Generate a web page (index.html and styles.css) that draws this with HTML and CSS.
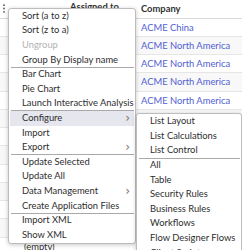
FILE: index.html
```
<!DOCTYPE html>
<html>
<head>
<meta charset="utf-8">
<link rel="stylesheet" href="styles.css">
</head>
<body>
<div class="table">
  <div class="row head">
    <div class="c0"><svg class="dots" width="4" height="9" viewBox="0 0 4 9"><circle cx="2" cy="1.2" r="0.9"/><circle cx="2" cy="4.5" r="0.9"/><circle cx="2" cy="7.8" r="0.9"/></svg></div>
    <div class="c1 hc1">Assigned to</div>
    <div class="c2">Company</div>
  </div>
  <div class="row"><div class="c0"></div><div class="c1">Beth Anglin</div><div class="c2 link">ACME China</div></div>
  <div class="row alt"><div class="c0"></div><div class="c1">Beth Anglin</div><div class="c2 link">ACME North America</div></div>
  <div class="row"><div class="c0"></div><div class="c1">David Loo</div><div class="c2 link">ACME North America</div></div>
  <div class="row alt"><div class="c0"></div><div class="c1">David Loo</div><div class="c2 link">ACME North America</div></div>
  <div class="row"><div class="c0"></div><div class="c1">Don Goodliffe</div><div class="c2 link">ACME North America</div></div>
  <div class="row alt"><div class="c0"></div><div class="c1">Fred Luddy</div><div class="c2 link">ACME North America</div></div>
  <div class="row"><div class="c0"></div><div class="c1">Fred Luddy</div><div class="c2 link">ACME North America</div></div>
  <div class="row alt"><div class="c0"></div><div class="c1">ITIL User</div><div class="c2 link">ACME North America</div></div>
  <div class="row"><div class="c0"></div><div class="c1">ITIL User</div><div class="c2 link">ACME North America</div></div>
  <div class="row alt"><div class="c0"></div><div class="c1">Luke Wilson</div><div class="c2 link">ACME North America</div></div>
  <div class="row"><div class="c0"></div><div class="c1">Luke Wilson</div><div class="c2 link">ACME North America</div></div>
  <div class="row alt"><div class="c0"></div><div class="c1">Luke Wilson</div><div class="c2 link">ACME North America</div></div>
  <div class="row"><div class="c0"></div><div class="c1">(empty)</div><div class="c2 link">ACME North America</div></div>
</div>

<div class="menu main">
  <div class="item">Sort (a to z)</div>
  <div class="item">Sort (z to a)</div>
  <div class="item disabled">Ungroup</div>
  <div class="item">Group By Display name</div>
  <div class="sep"></div>
  <div class="item">Bar Chart</div>
  <div class="item">Pie Chart</div>
  <div class="item">Launch Interactive Analysis</div>
  <div class="sep"></div>
  <div class="item active">Configure<span class="chev">&#x203A;</span></div>
  <div class="item">Import</div>
  <div class="item">Export<span class="chev">&#x203A;</span></div>
  <div class="sep"></div>
  <div class="item">Update Selected</div>
  <div class="item">Update All</div>
  <div class="item">Data Management<span class="chev">&#x203A;</span></div>
  <div class="item">Create Application Files</div>
  <div class="sep"></div>
  <div class="item">Import XML</div>
  <div class="item">Show XML</div>
</div>

<div class="menu sub">
  <div class="item">List Layout</div>
  <div class="item">List Calculations</div>
  <div class="item">List Control</div>
  <div class="sep"></div>
  <div class="item">All</div>
  <div class="item">Table</div>
  <div class="item">Security Rules</div>
  <div class="item">Business Rules</div>
  <div class="item">Workflows</div>
  <div class="item">Flow Designer Flows</div>
  <div class="item">Client Scripts</div>
</div>
</body>
</html>
```

FILE: styles.css
```
html, body {
  margin: 0;
  padding: 0;
  width: 242px;
  height: 250px;
  overflow: hidden;
  background: #fff;
}
body {
  position: relative;
  font-family: Lato, "Noto Sans", sans-serif;
  font-size: 9.4px;
  color: #2e2e2e;
}
.table {
  display: flex;
  flex-direction: column;
  width: 242px;
  overflow: hidden;
}
.row {
  display: flex;
  align-items: center;
  height: 18.25px;
  flex: none;
  box-sizing: border-box;
  border-bottom: 1px solid #e6e6e6;
  white-space: nowrap;
}
.row.alt { background: #f8f8f8; }
.row.head {
  height: 18.5px;
  border-bottom: 1px solid #d8d8d8;
  font-weight: 700;
  color: #333;
}
.c0 {
  width: 18px;
  flex: none;
  display: flex;
  justify-content: flex-start;
  padding-left: 1.5px;
  box-sizing: border-box;
}
.c1 {
  width: 118px;
  flex: none;
  padding-left: 6px;
  box-sizing: border-box;
  overflow: hidden;
}
.hc1 {
  padding-left: 52px;
  align-self: flex-start;
  padding-top: 1px;
}
.c2 {
  flex: 1;
  padding-left: 5px;
}
.dots { fill: #555; }
.link { color: #5060d2; }

.menu {
  position: absolute;
  background: #fff;
  border: 1px solid #bdbdbd;
  border-radius: 3px;
  box-shadow: 0 1px 4px rgba(0,0,0,0.22);
  padding: 0.3px 0;
  box-sizing: border-box;
  white-space: nowrap;
  overflow: hidden;
}
.main {
  left: 8px;
  top: 7.5px;
  width: 128px;
}
.sub {
  left: 136px;
  top: 113px;
  width: 106px;
  border-bottom-left-radius: 0;
  border-bottom-right-radius: 0;
}
.item {
  display: flex;
  justify-content: space-between;
  align-items: center;
  height: 14.6px;
  line-height: 14.6px;
  margin: 0 1px;
  padding: 0 4px 0 12px;
}
.item.disabled { color: #b3b3b3; }
.item.active { background: #e6e6ef; }
.chev {
  color: #777;
  font-size: 12px;
  font-family: "DejaVu Sans", sans-serif;
  line-height: 10px;
}
.sep {
  height: 1px;
  margin: -0.5px 1px -0.5px 2px;
  background: #a9a9a9;
}
```
